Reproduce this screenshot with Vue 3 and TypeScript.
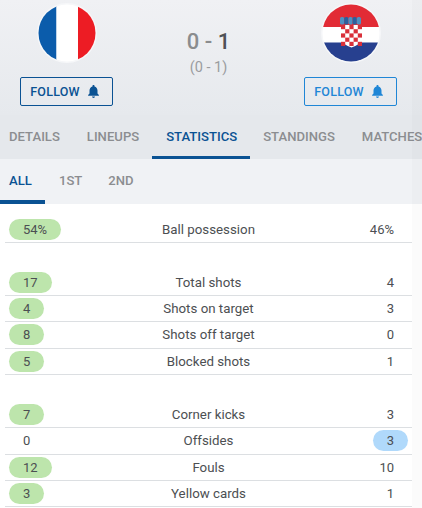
<script setup lang="ts">
interface Stat { home: string; label: string; away: string; win: 'home' | 'away' | 'none' }
const groups: Stat[][] = [
  [{ home: '54%', label: 'Ball possession', away: '46%', win: 'home' }],
  [
    { home: '17', label: 'Total shots', away: '4', win: 'home' },
    { home: '4', label: 'Shots on target', away: '3', win: 'home' },
    { home: '8', label: 'Shots off target', away: '0', win: 'home' },
    { home: '5', label: 'Blocked shots', away: '1', win: 'home' },
  ],
  [
    { home: '7', label: 'Corner kicks', away: '3', win: 'home' },
    { home: '0', label: 'Offsides', away: '3', win: 'away' },
    { home: '12', label: 'Fouls', away: '10', win: 'home' },
    { home: '3', label: 'Yellow cards', away: '1', win: 'home' },
  ],
]
const tabs = ['DETAILS', 'LINEUPS', 'STATISTICS', 'STANDINGS', 'MATCHES']
const subs = ['ALL', '1ST', '2ND']
const cells: { x: number; y: number }[] = []
for (let r = 0; r < 5; r++) {
  for (let c = 0; c < 5; c++) {
    if ((r + c) % 2 === 0) cells.push({ x: 20 + c * 4.2, y: 22 + r * 4.2 })
  }
}
const crown = [
  { x: 19, fill: '#4f8fc0' },
  { x: 23.2, fill: '#2b5f9e' },
  { x: 27.4, fill: '#4f8fc0' },
  { x: 31.6, fill: '#2b5f9e' },
  { x: 35.8, fill: '#4f8fc0' },
]
</script>

<template>
  <div class="page">
    <div class="main">
      <header class="head">
        <div class="team">
          <svg class="flag" viewBox="0 0 60 60">
            <defs><clipPath id="c1"><circle cx="30" cy="30" r="28.5" /></clipPath></defs>
            <circle cx="30" cy="30" r="30" fill="#f6f7f9" />
            <g clip-path="url(#c1)">
              <rect x="0" y="0" width="19.5" height="60" fill="#0b5cab" />
              <rect x="19.5" y="0" width="21.5" height="60" fill="#fff" />
              <rect x="41" y="0" width="19" height="60" fill="#ed1c24" />
            </g>
          </svg>
          <button class="follow dark">FOLLOW
            <svg class="bell" viewBox="0 0 14 14"><path d="M7 0c-.7 0-1.100.5-1.100 1.100v.6C3.900 2.200 2.700 4 2.700 6v3.200L1.200 10.700v.9h11.600v-.9l-1.500-1.500V6c0-2-1.200-3.800-3.200-4.300v-.6C8.100.5 7.700 0 7 0zM5.400 12.300c0 .9.700 1.600 1.600 1.600s1.600-.7 1.600-1.600z" /></svg>
          </button>
        </div>
        <div class="score">
          <div class="big"><span class="lose">0 - </span><span class="winner">1</span></div>
          <div class="half">(0 - 1)</div>
        </div>
        <div class="team">
          <svg class="flag" viewBox="0 0 60 60">
            <defs><clipPath id="c2"><circle cx="30" cy="30" r="28.5" /></clipPath></defs>
            <circle cx="30" cy="30" r="30" fill="#f6f7f9" />
            <g clip-path="url(#c2)">
              <rect x="0" y="0" width="60" height="24" fill="#e22b35" />
              <rect x="0" y="24" width="60" height="15.5" fill="#fff" />
              <rect x="0" y="39.5" width="60" height="21" fill="#27408f" />
              <rect v-for="(p, i) in crown" :key="i" :x="p.x" y="14" width="4.2" height="7.5" rx="1.6" :fill="p.fill" />
              <path d="M20 22h21v13c0 5-5.500 7.500-10.500 9.500C25.500 42.500 20 40 20 35z" fill="#fff" />
              <g fill="#d9303a">
                <rect v-for="(p, i) in cells" :key="i" :x="p.x" :y="p.y" width="4.2" height="4.2" />
              </g>
            </g>
          </svg>
          <button class="follow light">FOLLOW
            <svg class="bell" viewBox="0 0 14 14"><path d="M7 0c-.7 0-1.100.5-1.100 1.100v.6C3.900 2.200 2.700 4 2.700 6v3.200L1.200 10.700v.9h11.600v-.9l-1.500-1.500V6c0-2-1.200-3.800-3.200-4.300v-.6C8.100.5 7.700 0 7 0zM5.400 12.300c0 .9.700 1.600 1.600 1.600s1.600-.7 1.600-1.600z" /></svg>
          </button>
        </div>
      </header>
      <nav class="tabs">
        <a v-for="t in tabs" :key="t" class="tab" :class="{ on: t === 'STATISTICS' }">{{ t }}</a>
      </nav>
      <nav class="subs">
        <a v-for="s in subs" :key="s" class="sub" :class="{ on: s === 'ALL' }">{{ s }}</a>
      </nav>
      <section class="stats">
        <div v-for="(g, gi) in groups" :key="gi" class="group">
          <div v-for="r in g" :key="r.label" class="row">
            <div class="cell left"><span class="val" :class="{ green: r.win === 'home' }">{{ r.home }}</span></div>
            <div class="label">{{ r.label }}</div>
            <div class="cell right"><span class="val" :class="{ blue: r.win === 'away' }">{{ r.away }}</span></div>
          </div>
        </div>
      </section>
    </div>
    <div class="strip"></div>
  </div>
</template>

<style>
html, body { margin: 0; background: #fff; }
</style>

<style scoped>
.page { width: 422px; height: 508px; overflow: hidden; font-family: Roboto, sans-serif; position: relative; }
.main { width: 422px; }
.strip { position: absolute; top: 0; right: 0; bottom: 0; width: 10px; background: rgba(0, 0, 0, 0.015); }
.head { height: 115px; display: flex; justify-content: space-between; background: linear-gradient(#f0f1f4, #e6e9ed); padding: 0 25px 0 20px; box-sizing: border-box; }
.team { width: 93px; display: flex; flex-direction: column; align-items: center; padding-top: 3px; }
.flag { width: 60px; height: 60px; display: block; }
.follow { margin-top: 14px; width: 93px; height: 29px; box-sizing: border-box; background: transparent; border: 1px solid; border-radius: 2px; font: 500 12.5px Roboto, sans-serif; display: flex; align-items: center; justify-content: center; gap: 7px; padding: 0 3px 0 0; letter-spacing: .2px; }
.follow.dark { color: #0a5293; border-color: #0a5293; }
.follow.light { color: #1f86d6; border-color: #1f86d6; }
.bell { width: 13px; height: 13px; fill: currentColor; }
.score { text-align: center; padding-top: 29px; }
.big { font-size: 22px; font-weight: 500; line-height: 26px; }
.lose { color: #8a8c8e; }
.winner { color: #4f5256; }
.half { font-size: 14.5px; color: #9a9c9f; line-height: 18px; margin-top: 4px; }
.tabs { height: 44px; display: flex; background: #e5e8ec; box-sizing: border-box; padding-left: 9px; overflow: hidden; }
.tab { font-size: 13.1px; font-weight: 500; color: #8b8d90; line-height: 44px; margin-right: 27px; white-space: nowrap; flex: none; box-sizing: border-box; height: 44px; }
.tab.on { color: #0a5293; border-bottom: 3px solid #0a5293; margin: 0 13px 0 -14px; padding: 0 13px 0 14px; }
.subs { height: 45px; display: flex; background: #f0f2f5; padding-left: 9px; box-sizing: border-box; }
.sub { font-size: 13.1px; font-weight: 500; color: #8b8d90; line-height: 44px; margin-right: 26px; }
.sub.on { color: #0a5293; border-bottom: 4px solid #0a5293; height: 45px; box-sizing: border-box; margin: 0 14px 0 -9px; padding: 0 0 0 9px; width: 45px; }
.stats { padding: 12.4px 10px 0 5px; }
.group { margin-bottom: 26.7px; }
.row { height: 26.4px; box-sizing: border-box; display: grid; grid-template-columns: 1fr auto 1fr; align-items: center; border-bottom: 1px solid #dcdfe2; font-size: 13.3px; color: #4c4f52; }
.cell { display: flex; }
.right { justify-content: flex-end; }
.label { text-align: center; }
.val { display: inline-block; padding: 0 14px; line-height: 21px; margin: 0 4px; text-align: center; font-size: 13px; }
.val.green { background: #bde5ac; border-radius: 11px; }
.val.blue { background: #b0d9fb; border-radius: 11px; }
</style>
